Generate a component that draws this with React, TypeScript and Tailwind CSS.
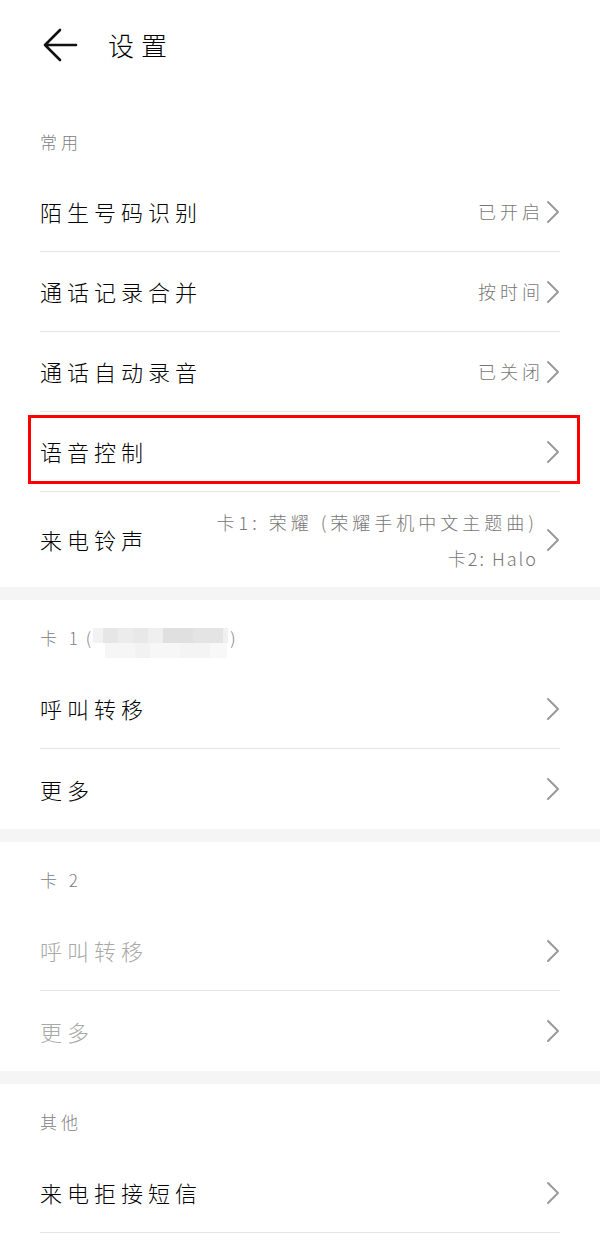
import React from "react";

const font = { fontFamily: '"Noto Sans CJK SC", "Noto Sans", sans-serif' };

function Chevron({ light }: { light?: boolean }) {
  return (
    <svg width="14" height="24" viewBox="0 0 14 24" className="shrink-0">
      <path d="M2 2 L12 12 L2 22" fill="none" stroke={light ? "#b0b0b0" : "#9a9a9a"} strokeWidth="2" strokeLinecap="round" strokeLinejoin="round" />
    </svg>
  );
}

function Row({ label, value, disabled, divider = true }: { label: string; value?: string; disabled?: boolean; divider?: boolean }) {
  return (
    <div className={`h-[80px] flex items-center mx-[40px] ${divider ? "border-b border-[#e6e6e6]" : ""}`}>
      <div className={`flex-1 text-[22px] tracking-[5px] font-light ${disabled ? "text-[#a8a8a8]" : "text-[#000]"}`}>{label}</div>
      {value && <div className="text-[18px] tracking-[4px] text-[#777] mr-[2px] font-light">{value}</div>}
      <Chevron />
    </div>
  );
}

function SectionHeader({ children, h = "h-[69px]" }: { children: React.ReactNode; h?: string }) {
  return (
    <div className={`${h} px-[40px] pt-[26px] text-[17px] leading-[24px] tracking-[4px] text-[#808080] font-light flex items-start`}>
      {children}
    </div>
  );
}

function Band() {
  return <div className="h-[13px] bg-[#f5f5f5]" />;
}

export default function App() {
  return (
    <div className="w-[600px] h-[1240px] bg-white overflow-hidden" style={font}>
      <div className="h-[104px] flex items-start pt-[28px]">
        <svg width="36" height="34" viewBox="0 0 36 34" className="ml-[42px]">
          <path d="M18 2 L3 17 L18 32 M3 17 L34 17" fill="none" stroke="#111" strokeWidth="2.6" strokeLinecap="round" strokeLinejoin="round" />
        </svg>
        <div className="ml-[30px] text-[26px] leading-[34px] tracking-[7px] text-[#000] font-light">设置</div>
      </div>

      <SectionHeader h="h-[68px]">常用</SectionHeader>
      <Row label="陌生号码识别" value="已开启" />
      <Row label="通话记录合并" value="按时间" />
      <Row label="通话自动录音" value="已关闭" />
      <div className="relative">
        <Row label="语音控制" />
        <div className="absolute top-[3px] bottom-[8px] left-[28px] right-[20px] border-[3px] border-[#ff0000]" />
      </div>
      <div className="h-[95px] flex items-center mx-[40px]">
        <div className="flex-1 text-[22px] tracking-[5px] text-[#000] font-light">来电铃声</div>
        <div className="flex flex-col items-end text-[18px] text-[#777] font-light tracking-[4px] mr-[8px] leading-[36px]">
          <div>卡1: 荣耀 (荣耀手机中文主题曲)</div>
          <div className="tracking-[2px]">卡2: Halo</div>
        </div>
        <Chevron />
      </div>
      <Band />

      <SectionHeader>
        <span>卡 1</span>
        <span className="tracking-normal ml-[4px]">(</span>
        <span className="flex flex-col mt-[2px] ml-[2px]">
          <span className="flex h-[15px]">
            <span className="w-[10px] bg-[#f2f2f2]" />
            <span className="w-[15px] bg-[#e6e6e6]" />
            <span className="w-[15px] bg-[#ececec]" />
            <span className="w-[15px] bg-[#e8e8e8]" />
            <span className="w-[15px] bg-[#efefef]" />
            <span className="w-[30px] bg-[#e0e0e0]" />
            <span className="w-[30px] bg-[#e4e4e4]" />
            <span className="w-[5px] bg-[#f0f0f0]" />
          </span>
          <span className="flex h-[15px] ml-[12px]">
            <span className="w-[30px] bg-[#f6f6f6]" />
            <span className="w-[15px] bg-[#f2f2f2]" />
            <span className="w-[30px] bg-[#f7f7f7]" />
            <span className="w-[30px] bg-[#f4f4f4]" />
            <span className="w-[17px] bg-[#f8f8f8]" />
          </span>
        </span>
        <span className="tracking-normal ml-[2px]">)</span>
      </SectionHeader>
      <Row label="呼叫转移" />
      <Row label="更多" divider={false} />
      <Band />

      <SectionHeader>卡 2</SectionHeader>
      <Row label="呼叫转移" disabled />
      <Row label="更多" disabled divider={false} />
      <Band />

      <SectionHeader>其他</SectionHeader>
      <Row label="来电拒接短信" />
    </div>
  );
}
